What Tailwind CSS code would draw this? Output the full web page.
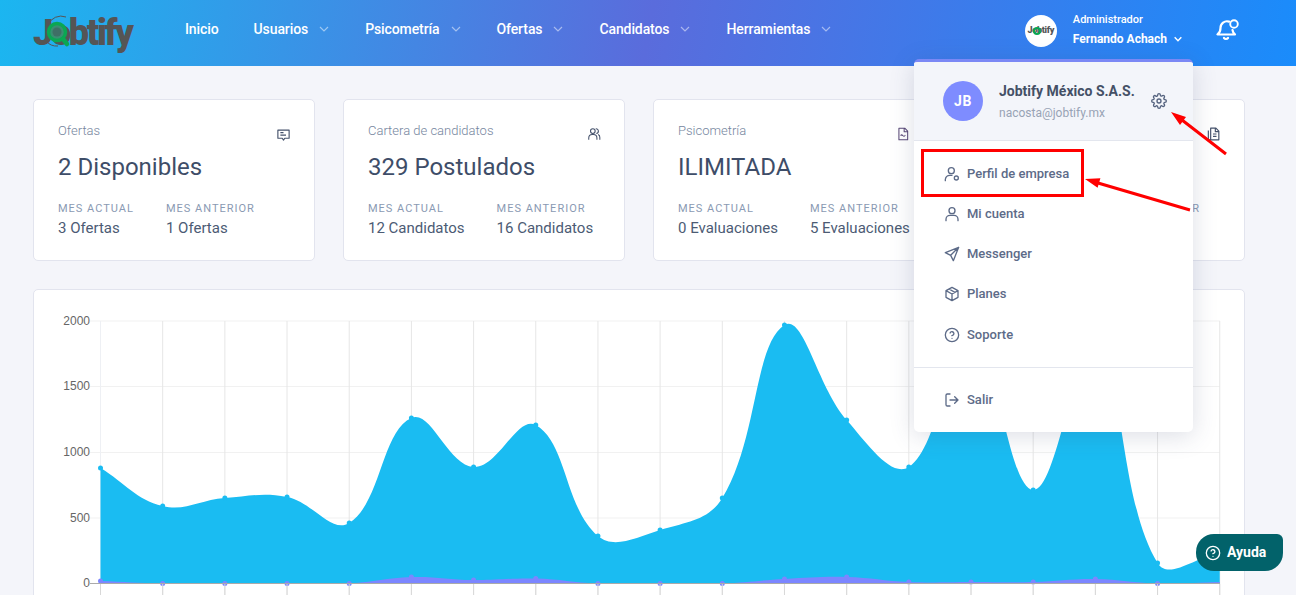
<!DOCTYPE html>
<html lang="es">
  <head>
    <meta charset="utf-8" />
    <meta content="width=device-width, initial-scale=1" name="viewport" />
    <title>Jobtify</title>
    <script src="https://cdn.jsdelivr.net/npm/@tailwindcss/browser@4"></script>
  </head>
  <body class="relative h-screen overflow-hidden bg-[#f4f5fa] font-['Roboto',sans-serif]">
    <!-- top bar -->
    <header class="flex h-[66px] items-center bg-[linear-gradient(100deg,#1bb6f0_0%,#5a6cdc_50%,#1a8cfb_100%)] pr-[56px] pb-[8px] pl-[33px] text-white">
      <a href="#" class="relative mt-[8px] block h-[46px] w-[100px] shrink-0 font-['Roboto',sans-serif] text-[36px] leading-[46px] font-black tracking-[-2.3px] text-[#555555]">
        Jobtify
        <svg class="absolute top-0 left-0" width="100" height="50" viewBox="0 0 100 50" fill="none">
          <path d="M15 15a14 14 0 0 1 18-8M13 31a14 14 0 0 0 12 5" stroke="#555555" stroke-width="1" />
          <circle cx="24" cy="22" r="8.500" fill="#3a8f72" stroke="#0aa753" stroke-width="3.500" />
          <circle cx="24" cy="22" r="4.500" fill="#3f6f66" />
          <path d="M30 29l4 5" stroke="#0aa753" stroke-width="4.500" stroke-linecap="round" />
        </svg>
      </a>
      <nav class="ml-[52px] flex items-center gap-[35px] text-[14px] font-medium tracking-[-0.1px]">
        <a href="#">Inicio</a>
        <a href="#" class="flex items-center gap-[10px]">Usuarios
          <svg class="text-white/50" width="12" height="12" viewBox="0 0 24 24" fill="none" stroke="currentColor" stroke-width="2.400"><path d="M4 8l8 8 8-8" /></svg>
        </a>
        <a href="#" class="flex items-center gap-[10px]">Psicometría
          <svg class="text-white/50" width="12" height="12" viewBox="0 0 24 24" fill="none" stroke="currentColor" stroke-width="2.400"><path d="M4 8l8 8 8-8" /></svg>
        </a>
        <a href="#" class="flex items-center gap-[10px]">Ofertas
          <svg class="text-white/50" width="12" height="12" viewBox="0 0 24 24" fill="none" stroke="currentColor" stroke-width="2.400"><path d="M4 8l8 8 8-8" /></svg>
        </a>
        <a href="#" class="flex items-center gap-[10px]">Candidatos
          <svg class="text-white/50" width="12" height="12" viewBox="0 0 24 24" fill="none" stroke="currentColor" stroke-width="2.400"><path d="M4 8l8 8 8-8" /></svg>
        </a>
        <a href="#" class="flex items-center gap-[10px]">Herramientas
          <svg class="text-white/50" width="12" height="12" viewBox="0 0 24 24" fill="none" stroke="currentColor" stroke-width="2.400"><path d="M4 8l8 8 8-8" /></svg>
        </a>
      </nav>
      <div class="ml-auto flex items-center">
        <div class="relative mt-[4px] flex h-8 w-8 items-center justify-center rounded-full bg-white text-[9px] font-black tracking-[-0.3px] text-[#555555]">
          Jobtify
          <span class="absolute top-[12px] left-[8px] h-[8px] w-[8px] rounded-full border-2 border-[#0aa753]"></span>
        </div>
        <div class="ml-4 flex flex-col">
          <span class="mt-[1px] text-[11px] leading-[13px] font-medium">Administrador</span>
          <span class="mt-[6px] flex items-center gap-[6px] text-[12px] leading-[14px] font-bold">Fernando Achach
            <svg width="10" height="10" viewBox="0 0 24 24" fill="none" stroke="currentColor" stroke-width="3.500"><path d="M4 8l8 8 8-8" /></svg>
          </span>
        </div>
        <svg class="ml-[33px]" width="24" height="24" viewBox="0 0 24 24" fill="none" stroke="currentColor" stroke-width="2.200" stroke-linecap="round" stroke-linejoin="round">
          <path d="M13 4.600A6.500 6.500 0 0 0 4.500 11c0 4.500-3 6.500-3 6.500H19s-2-1.300-2.500-4.500" />
          <path d="M12 21a2.500 2.500 0 0 1-4 0" />
          <circle cx="18" cy="7" r="3.800" stroke-width="1.900" />
        </svg>
      </div>
    </header>

    <main class="pt-[33px] pr-[51px] pl-[33px]">
      <!-- stat cards -->
      <section class="grid grid-cols-4 gap-7">
        <article class="h-[162px] rounded-[5px] border border-[#e2e4ee] bg-white px-6 pt-[23px]">
          <div class="flex h-[19px] items-start justify-between">
            <h3 class="text-[13px] leading-[15px] font-light text-[#76869e]">Ofertas</h3>
            <svg class="mt-[4px] mr-[-1px]" width="15" height="15" viewBox="0 0 24 24" fill="none" stroke="#44516b" stroke-width="1.800" stroke-linejoin="round"><path d="M3 5h18v13h-7l-2 3-2-3H3zM7 9h5M7 13h9" /></svg>
          </div>
          <p class="mt-[11px] text-[24px] leading-[28px] text-[#3e4d68]">2 Disponibles</p>
          <div class="mt-[21px] flex gap-8">
            <div>
              <p class="text-[11px] leading-[14px] tracking-[1px] text-[#8a9ab3] uppercase">Mes actual</p>
              <p class="mt-[3px] text-[15px] leading-[19px] text-[#4c5b74]">3 Ofertas</p>
            </div>
            <div>
              <p class="text-[11px] leading-[14px] tracking-[1px] text-[#8a9ab3] uppercase">Mes anterior</p>
              <p class="mt-[3px] text-[15px] leading-[19px] text-[#4c5b74]">1 Ofertas</p>
            </div>
          </div>
        </article>

        <article class="h-[162px] rounded-[5px] border border-[#e2e4ee] bg-white px-6 pt-[23px]">
          <div class="flex h-[19px] items-start justify-between">
            <h3 class="text-[13px] leading-[15px] font-light text-[#76869e]">Cartera de candidatos</h3>
            <svg class="mt-[4px] mr-[-1px]" width="14" height="14" viewBox="0 0 24 24" fill="none" stroke="#44516b" stroke-width="1.800"><circle cx="10" cy="7" r="4" /><path d="M3 22v-3a6 6 0 0 1 6-6h2a6 6 0 0 1 6 6v3M15 3a4 4 0 0 1 1 8M19 13a5 5 0 0 1 3 5v4" /></svg>
          </div>
          <p class="mt-[11px] text-[24px] leading-[28px] text-[#3e4d68]">329 Postulados</p>
          <div class="mt-[21px] flex gap-8">
            <div>
              <p class="text-[11px] leading-[14px] tracking-[1px] text-[#8a9ab3] uppercase">Mes actual</p>
              <p class="mt-[3px] text-[15px] leading-[19px] text-[#4c5b74]">12 Candidatos</p>
            </div>
            <div>
              <p class="text-[11px] leading-[14px] tracking-[1px] text-[#8a9ab3] uppercase">Mes anterior</p>
              <p class="mt-[3px] text-[15px] leading-[19px] text-[#4c5b74]">16 Candidatos</p>
            </div>
          </div>
        </article>

        <article class="h-[162px] rounded-[5px] border border-[#e2e4ee] bg-white px-6 pt-[23px]">
          <div class="flex h-[19px] items-start justify-between">
            <h3 class="text-[13px] leading-[15px] font-light text-[#76869e]">Psicometría</h3>
            <svg class="mt-[4px]" width="14" height="14" viewBox="0 0 24 24" fill="none" stroke="#5a4a78" stroke-width="1.800" stroke-linejoin="round"><path d="M5 2h10l5 5v15H5zM14 2v6h6M8 15c1-2 2-2 4 0s3 0 4-1" /></svg>
          </div>
          <p class="mt-[11px] text-[24px] leading-[28px] text-[#3e4d68]">ILIMITADA</p>
          <div class="mt-[21px] flex gap-8">
            <div>
              <p class="text-[11px] leading-[14px] tracking-[1px] text-[#8a9ab3] uppercase">Mes actual</p>
              <p class="mt-[3px] text-[15px] leading-[19px] text-[#4c5b74]">0 Evaluaciones</p>
            </div>
            <div>
              <p class="text-[11px] leading-[14px] tracking-[1px] text-[#8a9ab3] uppercase">Mes anterior</p>
              <p class="mt-[3px] text-[15px] leading-[19px] text-[#4c5b74]">5 Evaluaciones</p>
            </div>
          </div>
        </article>

        <article class="flex h-[162px] flex-col items-end rounded-[5px] border border-[#e2e4ee] bg-white pt-[27px] pr-6 pl-6">
          <svg width="14" height="14" viewBox="0 0 24 24" fill="none" stroke="#44516b" stroke-width="2" stroke-linejoin="round"><path d="M8 2h9l5 5v15H8zM16 2v6h6M4 6v16h4M12 12h6M12 16h6" /></svg>
          <p class="mt-[61px] mr-[20px] text-[11px] leading-[14px] tracking-[1px] text-[#8a9ab3] uppercase">Mes anterior</p>
        </article>
      </section>

      <!-- chart -->
      <section class="mt-7 h-[340px] rounded-[5px] border border-[#e2e4ee] bg-white">
        <svg id="chart" class="block" width="1210" height="320" viewBox="34 290 1210 320" font-family="Liberation Sans, sans-serif" font-size="12" fill="#666666" text-anchor="end">
          <text x="90" y="325">2000</text>
          <text x="90" y="390">1500</text>
          <text x="90" y="456">1000</text>
          <text x="90" y="522">500</text>
          <text x="90" y="587">0</text>
        </svg>
      </section>
    </main>

    <!-- account menu -->
    <div class="absolute top-[59px] left-[914px] h-[373px] w-[279px] overflow-hidden rounded-[5px] border-t-[3px] border-t-[#7b88f5] bg-white shadow-[0_4px_24px_rgba(60,70,110,0.18)]">
      <div class="flex h-[79px] items-start border-b border-[#e3e6ee] bg-[#f3f5fa] pt-[19px] pl-[29px]">
        <div class="flex h-10 w-10 items-center justify-center rounded-full bg-[#7e8cff] text-[14px] font-bold tracking-[0.5px] text-white">JB</div>
        <div class="ml-4">
          <p class="mt-[1px] text-[14px] leading-[18px] font-bold text-[#445066]">Jobtify México S.A.S.</p>
          <p class="mt-[5px] text-[12px] leading-[16px] text-[#98a3b5]">nacosta@jobtify.mx</p>
        </div>
        <svg class="mt-[12px] ml-[16px]" width="16" height="16" viewBox="0 0 24 24" fill="none" stroke="#55637f" stroke-width="2" stroke-linecap="round" stroke-linejoin="round"><circle cx="12" cy="12" r="3" /><path d="M19.400 15a1.650 1.650 0 0 0 .33 1.820l.06.06a2 2 0 1 1-2.830 2.830l-.06-.06a1.650 1.650 0 0 0-2.820 1.170V21a2 2 0 1 1-4 0v-.09A1.650 1.650 0 0 0 7.260 19.700l-.06.06a2 2 0 1 1-2.830-2.830l.06-.06a1.650 1.650 0 0 0-1.170-2.820H3a2 2 0 1 1 0-4h.09A1.650 1.650 0 0 0 4.300 7.260l-.06-.06A2 2 0 1 1 7.070 4.370l.06.06a1.650 1.650 0 0 0 1.820.33H9a1.650 1.650 0 0 0 1-1.510V3a2 2 0 1 1 4 0v.09a1.650 1.650 0 0 0 2.820 1.170l.06-.06a2 2 0 1 1 2.830 2.830l-.06.06a1.650 1.650 0 0 0-.33 1.820V9a1.650 1.650 0 0 0 1.510 1H21a2 2 0 1 1 0 4h-.09a1.650 1.650 0 0 0-1.510 1z" /></svg>
      </div>
      <ul class="pt-[13px] text-[13px] font-medium text-[#5d6b88]">
        <li class="flex h-10 items-center gap-[7px] pl-[30px]">
          <svg width="16" height="16" viewBox="0 0 24 24" fill="none" stroke="#5d6b88" stroke-width="2" stroke-linecap="round"><circle cx="11" cy="7" r="4.500" /><path d="M2 22v-2a7 7 0 0 1 7-6h3" /><circle cx="18.500" cy="18" r="3" /></svg>
          Perfil de empresa
        </li>
        <li class="flex h-10 items-center gap-[7px] pl-[30px]">
          <svg width="16" height="16" viewBox="0 0 24 24" fill="none" stroke="#5d6b88" stroke-width="2" stroke-linecap="round"><circle cx="12" cy="7" r="4.500" /><path d="M3 22v-2a6 6 0 0 1 6-6h6a6 6 0 0 1 6 6v2" /></svg>
          Mi cuenta
        </li>
        <li class="flex h-10 items-center gap-[7px] pl-[30px]">
          <svg width="16" height="16" viewBox="0 0 24 24" fill="none" stroke="#5d6b88" stroke-width="2" stroke-linejoin="round"><path d="M22 2L2 10l8 4 4 8zM22 2L10 14" /></svg>
          Messenger
        </li>
        <li class="flex h-10 items-center gap-[7px] pl-[30px]">
          <svg width="16" height="16" viewBox="0 0 24 24" fill="none" stroke="#5d6b88" stroke-width="2" stroke-linejoin="round"><path d="M12 2l9 5v10l-9 5-9-5V7zM3 7l9 5 9-5M12 12v10M7.500 4.500l9 5" /></svg>
          Planes
        </li>
        <li class="mt-px flex h-10 items-center gap-[7px] pl-[30px]">
          <svg width="16" height="16" viewBox="0 0 24 24" fill="none" stroke="#5d6b88" stroke-width="2" stroke-linecap="round"><circle cx="12" cy="12" r="10" /><path d="M9.100 9a3 3 0 0 1 5.800 1c0 2-3 3-3 3M12 17h.01" /></svg>
          Soporte
        </li>
      </ul>
      <div class="mt-[12px] border-t border-[#e3e6ee] pt-[12px] text-[13px] font-medium text-[#5d6b88]">
        <div class="flex h-10 items-center gap-[7px] pl-[30px]">
          <svg width="16" height="16" viewBox="0 0 24 24" fill="none" stroke="#5d6b88" stroke-width="2" stroke-linecap="round" stroke-linejoin="round"><path d="M9 21H5a2 2 0 0 1-2-2V5a2 2 0 0 1 2-2h4M16 17l5-5-5-5M21 12H9" /></svg>
          Salir
        </div>
      </div>
    </div>

    <!-- red annotations drawn over the screenshot -->
    <svg class="pointer-events-none absolute top-0 left-0" width="1296" height="595" viewBox="0 0 1296 595" fill="none">
      <rect x="922.500" y="150.500" width="160" height="45" stroke="#ff0000" stroke-width="3" />
      <path d="M1226 154L1182 120M1190 210L1098 183" stroke="#ff0000" stroke-width="3" />
      <path d="M1171 112L1180 125L1186 117zM1085 179L1097.600 187.800L1100.400 178.200z" fill="#ff0000" />
    </svg>

    <!-- help button -->
    <button class="fixed top-[534px] left-[1196px] flex h-[37px] w-[87px] items-center gap-[6px] rounded-tl-[18px] rounded-tr-[6px] rounded-br-[18px] rounded-bl-[18px] bg-[#02626a] pl-[9px] text-[14px] font-bold text-white">
      <svg width="16" height="16" viewBox="0 0 24 24" fill="none" stroke="currentColor" stroke-width="2" stroke-linecap="round"><circle cx="12" cy="12" r="10" /><path d="M9.100 9a3 3 0 0 1 5.800 1c0 2-3 3-3 3M12 17h.01" /></svg>
      Ayuda
    </button>

    <script>
      // same spline chart.js uses for tension 0.4
      const xs = Array.from({ length: 19 }, (_, i) => 100.5 + i * 62.18);
      const cyan = [468, 506, 498, 497, 523, 418, 467, 425, 536, 530, 498, 325, 420, 467, 340, 490, 350, 563, 553];
      const violet = [581, 583.5, 583.5, 583.5, 583.5, 577, 580, 578.5, 583.5, 583.5, 583.5, 579, 577, 582, 582, 582, 579, 583.5, 582];
      const svg = document.getElementById("chart");

      function add(tag, attrs) {
        const el = document.createElementNS("http://www.w3.org/2000/svg", tag);
        for (const key in attrs) el.setAttribute(key, attrs[key]);
        svg.appendChild(el);
      }

      function spline(ys) {
        const pts = xs.map((x, i) => [x, ys[i]]);
        const ctrl = pts.map((p, i) => {
          const a = pts[i - 1] || p;
          const b = pts[i + 1] || p;
          const d1 = Math.hypot(p[0] - a[0], p[1] - a[1]);
          const d2 = Math.hypot(b[0] - p[0], b[1] - p[1]);
          const s = d1 + d2;
          const f1 = (0.4 * d1) / s;
          const f2 = (0.4 * d2) / s;
          return {
            prev: [p[0] - f1 * (b[0] - a[0]), p[1] - f1 * (b[1] - a[1])],
            next: [p[0] + f2 * (b[0] - a[0]), p[1] + f2 * (b[1] - a[1])],
          };
        });
        let d = `M${pts[0][0]} 583.5 L${pts[0][0]} ${pts[0][1]}`;
        for (let i = 1; i < pts.length; i++) {
          const c1 = ctrl[i - 1].next;
          const c2 = ctrl[i].prev;
          d += ` C${c1[0]} ${c1[1]} ${c2[0]} ${c2[1]} ${pts[i][0]} ${pts[i][1]}`;
        }
        return d + ` L${pts[pts.length - 1][0]} 583.5 Z`;
      }

      [321, 386.5, 452.5, 518].forEach((y) => add("line", { x1: 90, x2: 1220, y1: y, y2: y, stroke: "#f1f1f1" }));
      xs.forEach((x, i) => add("line", { x1: x, x2: x, y1: 321, y2: 595, stroke: i ? "#e6e6e6" : "#eef0f4" }));
      add("path", { d: spline(cyan), fill: "#1abcf2" });
      add("path", { d: spline(violet), fill: "#7c86ff" });
      xs.slice(0, -1).forEach((x, i) => add("circle", { cx: x, cy: cyan[i], r: 2.5, fill: "#1abcf2" }));
      xs.slice(0, -1).forEach((x, i) => add("circle", { cx: x, cy: violet[i], r: 2.5, fill: "#7c86ff" }));
      add("line", { x1: 90, x2: 1220, y1: 583.5, y2: 583.5, stroke: "#aaaaaa" });
      xs.forEach((x) => add("line", { x1: x, x2: x, y1: 584, y2: 595, stroke: "#d8d8d8" }));
    </script>
  </body>
</html>
